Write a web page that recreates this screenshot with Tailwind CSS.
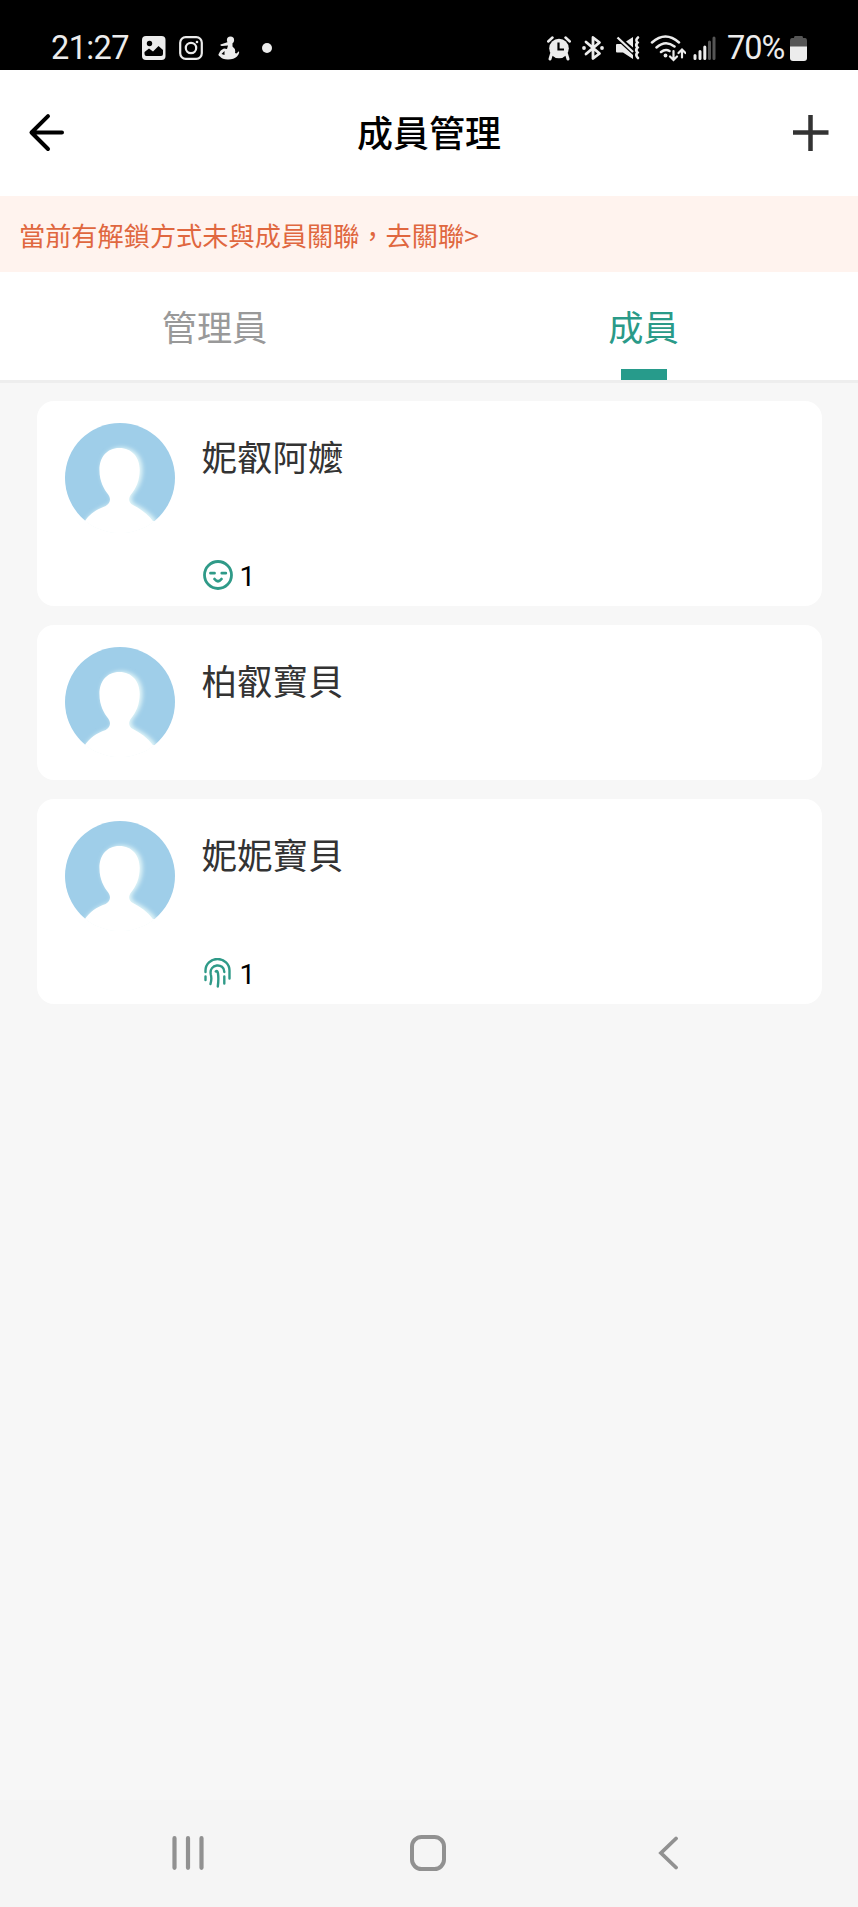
<!DOCTYPE html>
<html lang="zh-Hant">
<head>
<meta charset="utf-8">
<title>成員管理</title>
<script src="https://cdn.jsdelivr.net/npm/@tailwindcss/browser@4"></script>
</head>
<body class="bg-[#f7f7f7]">
<svg class="absolute h-0 w-0">
  <defs>
    <filter id="soft" x="-30%" y="-30%" width="160%" height="160%"><feGaussianBlur stdDeviation="2"/></filter>
    <clipPath id="disc"><circle cx="55" cy="55" r="55"/></clipPath>
    <path id="person" d="M55 24.500C42 24.500 34.500 34 34.500 46.500C34.500 58 39 65.500 43.500 71C46.500 75 46 80 41 82.500C31 86 25 90 19 98L19 114H90V98C84 90 76 85 69 81.500C64.500 79 64 75 67 71C72 65.500 76 57 76 46.500C76 34 68 24.500 55 24.500Z"/>
    <symbol id="avatar" viewBox="0 0 110 110">
      <g clip-path="url(#disc)">
        <rect width="110" height="98" fill="#9fcee9"/>
        <use href="#person" fill="#e3f6f8" filter="url(#soft)" transform="translate(1.500 0)"/>
        <use href="#person" fill="#fff" transform="translate(1 0.500) scale(.97 1)"/>
        <rect y="98" width="110" height="12" fill="#fff"/>
      </g>
    </symbol>
  </defs>
</svg>
<div class="flex h-[1907px] w-[858px] flex-col font-['Noto_Sans_CJK_TC',sans-serif]">

  <div class="flex h-[70px] items-center justify-between bg-black pt-[26px] pr-[51px] pl-[51px] text-[#ececec]">
    <div class="flex h-11 items-center">
      <span class="w-[91px] font-[Roboto,sans-serif] text-[32.500px] leading-[44px] tracking-[-0.600px]">21:27</span>
      <svg class="h-6 w-6" viewBox="0 0 24 24"><rect x="0" y="0" width="23.500" height="24" rx="4" fill="#ececec"/><circle cx="7.500" cy="7.500" r="2.700" fill="#000"/><path d="M2.500 18V16L7 12.500L11 15.500L16.500 10L21 14V18Q21 20 19 20H4.500Q2.500 20 2.500 18Z" fill="#000"/></svg>
      <svg class="ml-[13px] h-6 w-6" viewBox="0 0 24 24" fill="none" stroke="#ececec" stroke-width="2.200"><rect x="1.200" y="1.200" width="21.600" height="21.600" rx="5.500"/><circle cx="12" cy="12" r="5.200"/><circle cx="18" cy="6" r="1.300" fill="#ececec" stroke="none"/></svg>
      <svg class="ml-[15px] h-6 w-[22px]" viewBox="0 0 22 24" fill="#ececec"><circle cx="12.500" cy="4" r="3.600"/><path d="M10 6L2.500 8.500Q2 10 4 10L10 9.500L9 13L6 12.500Q2 14 1 17.500Q-0.500 19 2 20.500Q4 23.500 10 23.500Q16 23.500 19 20.500Q22 17 20.800 15.300L18.500 17.500L17 17Q18 13 14.500 10.500V6Z"/><path d="M3.500 18L6.500 15V19Z" fill="#000"/></svg>
      <span class="ml-[22px] h-[10px] w-[10px] rounded-full bg-[#ececec]"></span>
    </div>
    <div class="flex h-11 items-center">
      <svg class="h-[26px] w-6" viewBox="0 0 24 26" fill="#ececec"><circle cx="12" cy="13.500" r="9.800"/><path d="M4.500 19L3 24M19.500 19L21 24" stroke="#ececec" stroke-width="3" stroke-linecap="round"/><path d="M1.200 6.500L5.500 2.500M22.800 6.500L18.500 2.500" stroke="#ececec" stroke-width="2.500" stroke-linecap="round"/><path d="M11.500 7.500V14.500H17" fill="none" stroke="#000" stroke-width="2.200"/></svg>
      <svg class="ml-[11px] h-[26px] w-[22px]" viewBox="0 0 22 26" fill="none" stroke="#ececec" stroke-width="2.800"><path d="M4 7L17.500 18.500L11 23.500V2.500L17.500 7.500L4 19" stroke-linejoin="round" stroke-linecap="round"/><circle cx="2" cy="13" r="1.900" fill="#ececec" stroke="none"/><circle cx="20" cy="13" r="1.900" fill="#ececec" stroke="none"/></svg>
      <svg class="ml-3 h-[26px] w-6" viewBox="0 0 24 26" fill="#ececec"><path d="M1 9H5L17 20V24L7 17.500H1Q0 17.500 0 16.500V10Q0 9 1 9ZM10 6.500L17 2V12.500Z"/><path d="M1.500 2.500L17 17" stroke="#ececec" stroke-width="2.300"/><path d="M22 2.500Q19 5 21.500 7.500Q19 10 21.500 12.500Q19 15 21.500 17.500Q19 20 22 23" fill="none" stroke="#ececec" stroke-width="2.600" stroke-linecap="round"/></svg>
      <svg class="ml-[10px] h-[28px] w-9" viewBox="0 0 36 28" fill="none" stroke="#ececec" stroke-width="2.500" stroke-linecap="round"><path d="M2 8.500Q15.500-3.500 29 8.500M6.500 13.500Q15.500 5.500 24.500 12.500M11 18Q15.500 14.500 19.500 17"/><circle cx="15.500" cy="21.500" r="1.900" fill="#ececec" stroke="none"/><path d="M23.500 17V25.500M20 22.500L23.500 26L27 22.500M32 23.500V16.500M28.500 19L32 15.500L35.500 19" stroke-width="2.200"/></svg>
      <svg class="ml-[7px] h-6 w-[23px]" viewBox="0 0 23 24" fill="none" stroke="#ececec" stroke-width="3" stroke-linecap="round"><path d="M2 19.500V22.500M7 15.500V22.500M11.800 11V22.500"/><path d="M16.500 6V22.500M21 2V22.500" stroke="#555"/></svg>
      <span class="ml-[11px] w-[61px] font-[Roboto,sans-serif] text-[32.500px] leading-[44px] tracking-[-1px]">70%</span>
      <svg class="ml-0.5 h-[25px] w-[17px]" viewBox="0 0 17 25"><path d="M5 0H12Q13 0 13 2H15Q17 2 17 5V11H0V5Q0 2 2 2H4Q4 0 5 0Z" fill="#555"/><path d="M0 10.500H17V22Q17 25 14 25H3Q0 25 0 22Z" fill="#ececec"/></svg>
    </div>
  </div>

  <header class="flex h-[126px] items-center justify-between bg-white pr-7 pl-7">
    <svg class="h-10 w-[38px]" viewBox="0 0 38 40" fill="none" stroke="#000" stroke-width="4" stroke-linecap="round" stroke-linejoin="round"><path d="M20 3.200L3.500 19.500L20 36M3.500 19.500H34"/></svg>
    <h1 class="pb-1 text-[36px] leading-[52px] font-medium text-black">成員管理</h1>
    <svg class="h-9 w-[38px]" viewBox="0 0 38 36" stroke="#333" stroke-width="4.500"><path d="M1 17.500H36.500M18.500 0V36"/></svg>
  </header>

  <div class="flex h-[76px] items-center bg-[#fff3ee] px-[19px] pt-[3px] text-[26.200px] text-[#e0673f]">當前有解鎖方式未與成員關聯，去關聯&gt;</div>

  <nav class="flex h-[111px] border-b-[3px] border-[#eee] bg-white text-[35.200px] leading-[52px]">
    <div class="flex flex-1 flex-col items-center pt-[27.500px] text-[#999]">管理員</div>
    <div class="flex flex-1 flex-col items-center justify-between pt-[27.500px] text-[#2a9a88]"><span>成員</span><span class="h-[11px] w-[46px] bg-[#279b8b]"></span></div>
  </nav>

  <main class="flex flex-1 flex-col gap-[18.500px] px-[36.500px] pt-[17.500px] text-[35.500px] leading-[52px] text-[#333]">
    <section class="flex h-[205.500px] rounded-[17px] bg-white pt-[22.500px] pl-7">
      <svg class="h-[110px] w-[110px]"><use href="#avatar"/></svg>
      <div class="ml-[27px] flex flex-col pt-[7px]">
        <span>妮叡阿嬤</span>
        <div class="mt-[73px] flex items-center">
          <svg class="ml-px h-[30px] w-[30px]" viewBox="0 0 30 30" fill="none" stroke="#2f9a88" stroke-width="2.800" stroke-linecap="round"><circle cx="15" cy="15" r="13.500"/><path d="M7.500 13.200H11.500M18.800 13.200H22.800M11.500 19Q15 23.500 18.500 19"/></svg>
          <span class="ml-[7px] pt-[3px] font-[Roboto,sans-serif] text-[28px] leading-[37px] text-black">1</span>
        </div>
      </div>
    </section>
    <section class="flex h-[155.500px] rounded-[17px] bg-white pt-[22.500px] pl-7">
      <svg class="h-[110px] w-[110px]"><use href="#avatar"/></svg>
      <span class="ml-[27px] pt-[7px]">柏叡寶貝</span>
    </section>
    <section class="flex h-[205.500px] rounded-[17px] bg-white pt-[22.500px] pl-7">
      <svg class="h-[110px] w-[110px]"><use href="#avatar"/></svg>
      <div class="ml-[27px] flex flex-col pt-[7px]">
        <span>妮妮寶貝</span>
        <div class="mt-[73px] flex items-center">
          <svg class="ml-px h-[30px] w-[30px]" viewBox="0 0 30 30" fill="none" stroke="#2f9a88" stroke-width="2.400" stroke-linecap="round"><path d="M2.500 14V12.500A12 11.500 0 0 1 26.500 12.500V20.500M2.500 18.500V22M7.500 26Q9 21 7.800 16.500C5.500 5.500 21.500 4.500 21.300 14M21.300 18.500V25.500M12.800 13.500Q14.500 12 15 15.500Q15.800 21 14.800 28.500"/></svg>
          <span class="ml-[7px] pt-[3px] font-[Roboto,sans-serif] text-[28px] leading-[37px] text-black">1</span>
        </div>
      </div>
    </section>
  </main>

  <footer class="flex h-[107px] items-center bg-[#f5f5f5] pb-px pl-[172px]">
    <svg class="h-[34px] w-8" viewBox="0 0 32 34" stroke="#919191" stroke-width="4.200" stroke-linecap="round"><path d="M2.500 2.200V31.800M16 2.200V31.800M29.500 2.200V31.800"/></svg>
    <svg class="ml-[206px] h-9 w-9" viewBox="0 0 36 36" fill="none" stroke="#919191" stroke-width="4"><rect x="2" y="2" width="32" height="32" rx="9.500"/></svg>
    <svg class="ml-[212px] h-[34px] w-5" viewBox="0 0 20 34" fill="none" stroke="#919191" stroke-width="3.800" stroke-linecap="round"><path d="M18 2.500L3 17L18 31.500"/></svg>
  </footer>
</div>
</body>
</html>
